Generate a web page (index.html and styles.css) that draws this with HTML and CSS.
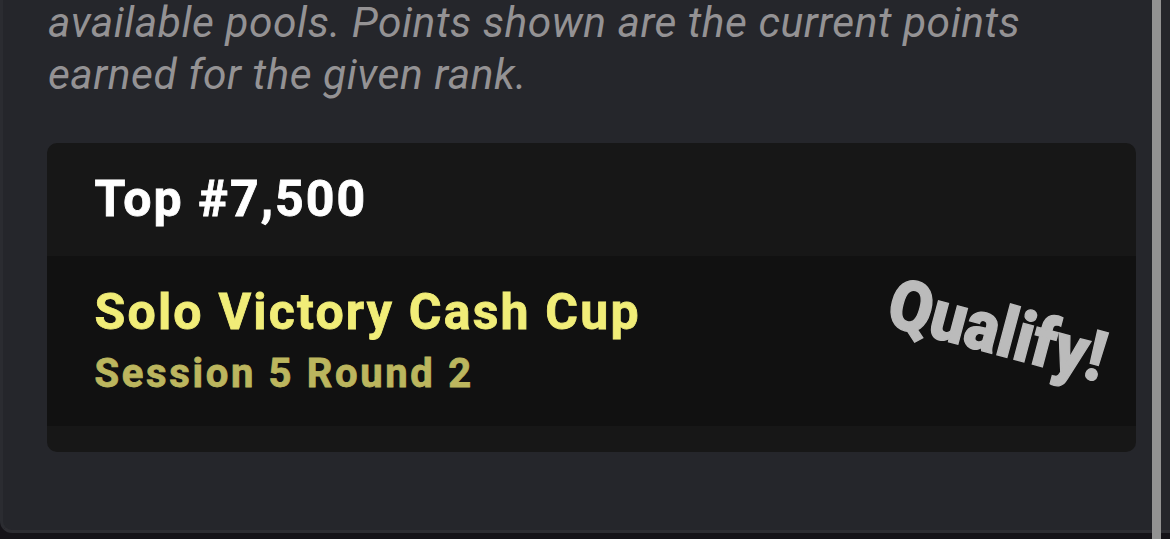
FILE: index.html
```html
<!DOCTYPE html>
<html lang="en">
<head>
<meta charset="utf-8">
<title>Payouts</title>
<link rel="stylesheet" href="styles.css">
</head>
<body>
<main class="panel">
<p class="note">available pools. Points shown are the current points<br>earned for the given rank.</p>
<section class="card">
<h2 class="rank">Top #7,500</h2>
<div class="reward">
<div>
<div class="event">Solo Victory Cash Cup</div>
<div class="session">Session 5 Round 2</div>
</div>
<span class="qualify">Qualify!</span>
</div>
</section>
</main>
<div class="scrollbar"></div>
</body>
</html>
```

FILE: styles.css
```css
* { box-sizing: border-box; }
body { margin: 0; height: 539px; overflow: hidden; background: #151318; font-family: Roboto, sans-serif; }
.panel { display: flex; flex-direction: column; width: 1190px; height: 533px; padding-left: 44px; background: #25262b; border-bottom: 3px solid #2d2d32; border-left: 3px solid #2b2c31; border-bottom-left-radius: 12px; }
.note { margin: -3px 0 0; padding-left: 1px; height: 146px; font-size: 42.5px; line-height: 52px; font-style: italic; letter-spacing: 0.52px; color: #949294; white-space: nowrap; }
.card { width: 1089px; height: 309px; background: #171717; border-radius: 10px; overflow: hidden; }
.rank, .event, .session { font-weight: 700; -webkit-text-stroke: 0.8px currentColor; }
.rank { margin: 0; height: 113px; padding-left: 47.5px; font-size: 50px; line-height: 113px; letter-spacing: 2.05px; color: #fff; }
.reward { height: 170px; padding: 27px 27px 0 47.5px; background: #111; display: flex; justify-content: space-between; }
.event { font-size: 50px; line-height: 59px; letter-spacing: 2.2px; color: #f1ed78; }
.session { font-size: 40px; line-height: 63px; letter-spacing: 2.65px; color: #bcb65e; }
.qualify { height: 70px; margin: 12px -12px 0 0; font-size: 70px; line-height: 70px; font-weight: 900; letter-spacing: 0.3px; color: #bbb; -webkit-text-stroke: 1.4px currentColor; transform: rotate(15deg) scaleX(.9); }
.scrollbar { position: absolute; top: 0; right: 9px; width: 9px; height: 539px; background: #929292; }
```
